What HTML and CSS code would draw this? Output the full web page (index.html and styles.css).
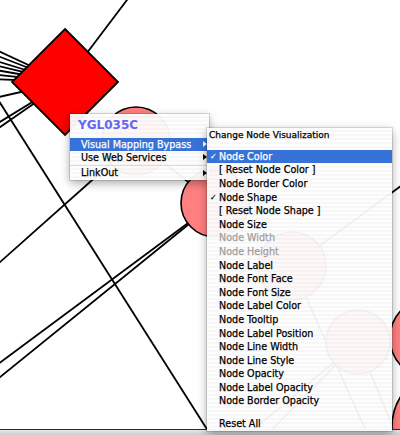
FILE: index.html
```html
<!DOCTYPE html>
<html>
<head>
<meta charset="utf-8">
<link rel="stylesheet" href="styles.css">
</head>
<body>
<div class="stage">
  <svg class="graph" width="400" height="429" viewBox="0 0 400 429">
    <g class="edges">
      <line x1="65" y1="82" x2="-10" y2="47"/>
      <line x1="65" y1="82" x2="-10" y2="53"/>
      <line x1="65" y1="82" x2="-10" y2="59"/>
      <line x1="65" y1="82" x2="-10" y2="64"/>
      <line x1="65" y1="82" x2="-10" y2="69"/>
      <line x1="65" y1="82" x2="-10" y2="74"/>
      <line x1="65" y1="82" x2="-10" y2="79"/>
      <line x1="65" y1="82" x2="-10" y2="99"/>
      <line x1="65" y1="82" x2="-10" y2="128"/>
      <line x1="65" y1="82" x2="-10" y2="134"/>
      <line x1="65" y1="82" x2="133" y2="-8"/>
      <line x1="-10" y1="87" x2="210" y2="434"/>
      <line x1="-10" y1="271" x2="136" y2="141"/>
      <line x1="-6" y1="367" x2="215" y2="203"/>
      <line x1="-6" y1="382" x2="215" y2="203"/>
      <line x1="136" y1="141" x2="215" y2="203"/>
      <line x1="292" y1="266" x2="420" y2="172"/>
      <line x1="292" y1="266" x2="370" y2="440"/>
      <line x1="358" y1="342" x2="240" y2="441"/>
      <line x1="358" y1="342" x2="261" y2="441"/>
      <line x1="358" y1="342" x2="398" y2="440"/>
    </g>
    <g class="nodes">
      <polygon class="diamond" points="65,29 118,82 65,135 12,82"/>
      <circle cx="136" cy="141" r="34"/>
      <circle cx="215" cy="203" r="34"/>
      <circle cx="292" cy="266" r="34"/>
      <circle cx="358" cy="342" r="32"/>
      <circle cx="430" cy="338" r="40"/>
      <circle cx="449" cy="427" r="57"/>
    </g>
  </svg>
  <div class="status"></div>

  <div class="menu ctx">
    <div class="title">YGL035C</div>
    <div class="item active">Visual Mapping Bypass</div>
    <div class="item">Use Web Services</div>
    <div class="sep"></div>
    <div class="item">LinkOut</div>
  </div>

  <div class="menu submenu">
    <div class="header">Change Node Visualization</div>
    <div class="gap"></div>
    <div class="row active"><span class="check">✓</span>Node Color</div>
    <div class="row"><span class="check"></span>[ Reset Node Color ]</div>
    <div class="row"><span class="check"></span>Node Border Color</div>
    <div class="row"><span class="check">✓</span>Node Shape</div>
    <div class="row"><span class="check"></span>[ Reset Node Shape ]</div>
    <div class="row"><span class="check"></span>Node Size</div>
    <div class="row disabled"><span class="check"></span>Node Width</div>
    <div class="row disabled"><span class="check"></span>Node Height</div>
    <div class="row"><span class="check"></span>Node Label</div>
    <div class="row"><span class="check"></span>Node Font Face</div>
    <div class="row"><span class="check"></span>Node Font Size</div>
    <div class="row"><span class="check"></span>Node Label Color</div>
    <div class="row"><span class="check"></span>Node Tooltip</div>
    <div class="row"><span class="check"></span>Node Label Position</div>
    <div class="row"><span class="check"></span>Node Line Width</div>
    <div class="row"><span class="check"></span>Node Line Style</div>
    <div class="row"><span class="check"></span>Node Opacity</div>
    <div class="row"><span class="check"></span>Node Label Opacity</div>
    <div class="row"><span class="check"></span>Node Border Opacity</div>
    <div class="gap2"></div>
    <div class="row"><span class="check"></span>Reset All</div>
  </div>
</div>
</body>
</html>
```

FILE: styles.css
```css
html, body {
  margin: 0;
  padding: 0;
}
body {
  width: 400px;
  height: 435px;
  overflow: hidden;
  background: #fff;
  font-family: "DejaVu Sans", "Verdana", sans-serif;
  color: #000;
}
.stage {
  position: relative;
  width: 400px;
  height: 435px;
  overflow: hidden;
}
.graph {
  display: block;
  background: #fff;
}
.edges line {
  stroke: #000;
  stroke-width: 1.8;
}
.nodes circle {
  fill: #ff8080;
  stroke: #000;
  stroke-width: 1.6;
}
.nodes .diamond {
  fill: #ff0000;
  stroke: #000;
  stroke-width: 1.8;
  stroke-linejoin: miter;
}
.status {
  height: 5px;
  border-top: 1px solid #1f2d52;
  background: linear-gradient(#e6e6e6, #cdcdcd);
}

.menu {
  position: absolute;
  background: repeating-linear-gradient(to bottom, rgba(253,253,253,0.955) 0 2px, rgba(247,247,247,0.955) 2px 4px);
  box-shadow: 0 0 0 1px rgba(0,0,0,0.12), 0 3px 9px rgba(0,0,0,0.35);
  -webkit-text-stroke: 0.25px currentColor;
}
.ctx {
  left: 70px;
  top: 114px;
  width: 139px;
  padding-bottom: 1px;
}
.title {
  height: 23.5px;
  line-height: 23.5px;
  padding-left: 8px;
  font-size: 12px;
  font-weight: bold;
  color: #6666f4;
  -webkit-text-stroke: 0;
}
.item {
  height: 13.3px;
  font-size: 9.6px;
  padding-left: 11px;
  padding-right: 2px;
  display: flex;
  align-items: center;
  justify-content: space-between;
  white-space: nowrap;
}
.item::after {
  content: "";
  width: 0;
  height: 0;
  border-left: 4px solid #000;
  border-top: 3px solid transparent;
  border-bottom: 3px solid transparent;
}
.item.active {
  background: #3672d8;
  color: #fff;
}
.item.active::after {
  border-left-color: #fff;
}
.sep {
  height: 1px;
  margin: 0.5px 0;
  background: #dadada;
}

.submenu {
  left: 207px;
  top: 128px;
  width: 185px;
  height: 303px;
}
.header {
  height: 14px;
  line-height: 14px;
  font-size: 9px;
  padding-left: 2px;
  white-space: nowrap;
}
.gap {
  height: 7.5px;
}
.gap2 {
  height: 9.3px;
}
.row {
  height: 13.6px;
  font-size: 9.6px;
  display: flex;
  align-items: center;
  padding-left: 3px;
  white-space: nowrap;
}
.row.active {
  background: #3672d8;
  color: #fff;
}
.row.disabled {
  color: #9e9e9e;
}
.check {
  width: 9px;
  font-size: 8px;
  flex: none;
}
```
